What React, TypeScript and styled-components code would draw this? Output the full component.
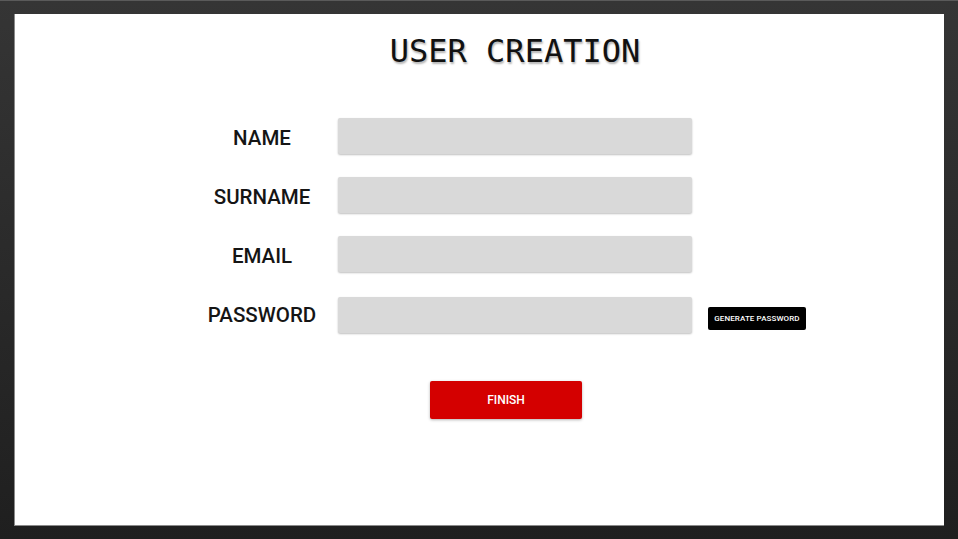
import React from "react";
import styled, { createGlobalStyle } from "styled-components";

const Global = createGlobalStyle`
  html, body { margin: 0; padding: 0; }
  body {
    width: 958px;
    height: 539px;
    overflow: hidden;
    background: linear-gradient(#353535, #1f1f1f);
    font-family: Roboto, "Liberation Sans", sans-serif;
  }
`;

const Frame = styled.div`
  box-sizing: border-box;
  width: 958px;
  height: 539px;
  padding: 13px 14px 13px 14px;
  border-top: 1px solid #5a5a5a;
`;

const Panel = styled.main`
  box-sizing: border-box;
  height: 100%;
  background: #fff;
  border-left: 1px solid #8a8a8a;
  border-bottom: 1px solid #8a8a8a;
  padding: 17px 0 0 182px;
`;

const Form = styled.div`
  display: grid;
  grid-template-columns: 130px 354px 98px;
  column-gap: 11px;
  row-gap: 23px;
  align-items: center;
`;

const Title = styled.h1`
  grid-column: 2;
  margin: 0 0 1px;
  text-align: center;
  font-family: "DejaVu Sans Mono", "Liberation Mono", monospace;
  font-weight: normal;
  font-size: 32px;
  color: #111;
  text-shadow: 1px 2px 2px rgba(0, 0, 0, 0.3);
  line-height: 40px;
`;

const Label = styled.label<{ $shift?: number }>`
  grid-column: 1;
  text-align: center;
  font-size: 20.5px;
  font-weight: 500;
  color: #151515;
  margin-top: ${(p) => (p.$shift ?? 0) + 3}px;
`;

const Input = styled.div<{ $shift?: number }>`
  grid-column: 2;
  height: 36px;
  background: #d9d9d9;
  border-radius: 2px;
  box-shadow: 0 1px 2px rgba(0, 0, 0, 0.25);
  margin-top: ${(p) => p.$shift ?? 0}px;
`;

const SmallButton = styled.button`
  grid-column: 3;
  align-self: start;
  margin: 12px 0 0 5px;
  height: 23px;
  width: 98px;
  padding: 0;
  border: none;
  border-radius: 2px;
  background: #000;
  color: #fff;
  font-family: Roboto, "Liberation Sans", sans-serif;
  font-weight: 500;
  font-size: 8px;
  letter-spacing: 0.1px;
`;

const Finish = styled.button`
  grid-column: 2;
  justify-self: start;
  margin: 25px 0 0 92px;
  width: 152px;
  height: 38px;
  border: none;
  border-radius: 2px;
  background: #d40000;
  color: #fff;
  font-family: Roboto, "Liberation Sans", sans-serif;
  font-weight: 500;
  font-size: 12px;
  box-shadow: 0 1px 3px rgba(0, 0, 0, 0.3);
`;

const Spacer = styled.span``;

const fields = ["NAME", "SURNAME", "EMAIL"];

export default function App() {
  return (
    <>
      <Global />
      <Frame>
        <Panel>
          <Form>
            <Title>USER CREATION</Title>
            <Spacer />
            <Spacer />
            {fields.map((f) => (
              <React.Fragment key={f}>
                <Label>{f}</Label>
                <Input />
                <Spacer />
              </React.Fragment>
            ))}
            <Label $shift={-1}>PASSWORD</Label>
            <Input $shift={2} />
            <SmallButton>GENERATE PASSWORD</SmallButton>
            <Finish>FINISH</Finish>
          </Form>
        </Panel>
      </Frame>
    </>
  );
}
